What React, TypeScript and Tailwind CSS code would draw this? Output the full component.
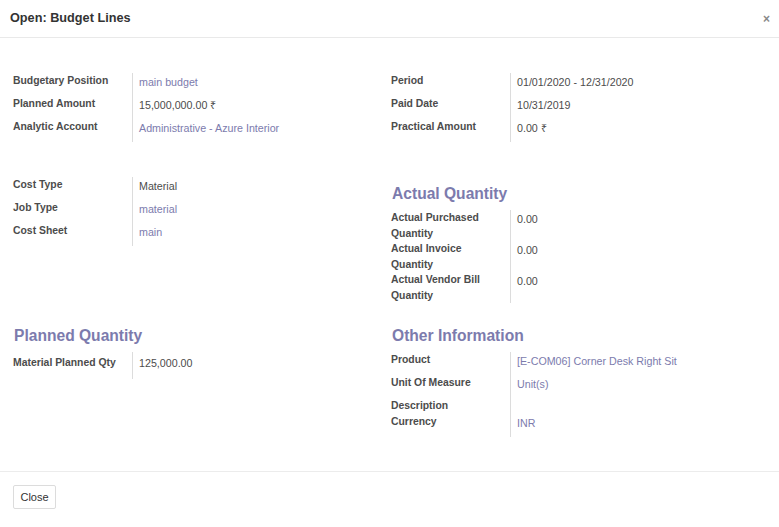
import * as React from "react";

type Row = { label: string; value?: string; link?: boolean };

const purple = "text-[#7c7bad]";

function Group({ rows, shift = false }: { rows: Row[]; shift?: boolean }) {
  return (
    <div className="grid grid-cols-[119px_1fr] content-start">
      {rows.map((r) => (
        <React.Fragment key={r.label}>
          <div
            className={`text-[10.4px] font-bold leading-[15.5px] text-[#4c4c4c] pr-2 ${
              shift ? "pt-[3px]" : ""
            }`}
          >
            {r.label}
          </div>
          <div className="border-l border-[#dcdcdc] pl-[6px]">
            {r.value !== undefined && (
              <div
                className={`text-[10.7px] leading-[16px] ${
                  r.link ? purple : "text-[#4c4c4c]"
                } ${shift ? "pt-[3px] pb-[8px]" : "pt-[1px] pb-[6px]"}`}
              >
                {r.value}
              </div>
            )}
          </div>
        </React.Fragment>
      ))}
    </div>
  );
}

function Heading({ children }: { children: React.ReactNode }) {
  return (
    <div className={`h-[33px] flex items-center pl-px text-[15.6px] font-bold ${purple}`}>
      {children}
    </div>
  );
}

export default function App() {
  return (
    <div className="h-[527px] w-[779px] flex flex-col bg-white font-['Liberation_Sans',Arial,sans-serif]">
      {/* Header */}
      <div className="h-[38px] flex items-center justify-between border-b border-[#e9e9e9] pl-[10px] pr-[9px]">
        <span className="text-[12.7px] font-bold text-[#333]">Open: Budget Lines</span>
        <span className="text-[12px] font-bold text-[#888] leading-none">×</span>
      </div>

      {/* Body */}
      <div className="flex-1 px-[13px]">
        <div className="grid grid-cols-[378px_1fr] items-start mt-[35px]">
          <Group
            rows={[
              { label: "Budgetary Position", value: "main budget", link: true },
              { label: "Planned Amount", value: "15,000,000.00 ₹" },
              { label: "Analytic Account", value: "Administrative - Azure Interior", link: true },
            ]}
          />
          <Group
            rows={[
              { label: "Period", value: "01/01/2020 - 12/31/2020" },
              { label: "Paid Date", value: "10/31/2019" },
              { label: "Practical Amount", value: "0.00 ₹" },
            ]}
          />
        </div>

        <div className="grid grid-cols-[378px_1fr] items-start mt-[35px]">
          <Group
            rows={[
              { label: "Cost Type", value: "Material" },
              { label: "Job Type", value: "material", link: true },
              { label: "Cost Sheet", value: "main", link: true },
            ]}
          />
          <div>
            <Heading>Actual Quantity</Heading>
            <Group
              rows={[
                { label: "Actual Purchased Quantity", value: "0.00" },
                { label: "Actual Invoice Quantity", value: "0.00" },
                { label: "Actual Vendor Bill Quantity", value: "0.00" },
              ]}
            />
          </div>
        </div>

        <div className="grid grid-cols-[378px_1fr] items-start mt-[16px]">
          <div>
            <Heading>Planned Quantity</Heading>
            <Group shift rows={[{ label: "Material Planned Qty", value: "125,000.00" }]} />
          </div>
          <div>
            <Heading>Other Information</Heading>
            <Group
              rows={[
                { label: "Product", value: "[E-COM06] Corner Desk Right Sit", link: true },
                { label: "Unit Of Measure", value: "Unit(s)", link: true },
                { label: "Description" },
                { label: "Currency", value: "INR", link: true },
              ]}
            />
          </div>
        </div>
      </div>

      {/* Footer */}
      <div className="h-[56px] border-t border-[#ececec] px-[13px] pt-[12px]">
        <button
          type="button"
          className="h-[24px] w-[43px] rounded-[2px] border border-[#dcdcdc] bg-white text-[11px] text-[#333]"
        >
          Close
        </button>
      </div>
    </div>
  );
}
